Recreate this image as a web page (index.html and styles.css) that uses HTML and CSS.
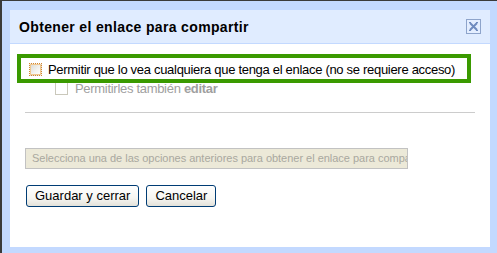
FILE: index.html
```html
<!DOCTYPE html>
<html lang="es">
<head>
<meta charset="utf-8">
<title>Obtener el enlace para compartir</title>
<link rel="stylesheet" href="styles.css">
</head>
<body>
<div class="frame">
  <div class="dialog">
    <div class="header">
      <span class="title">Obtener el enlace para compartir</span>
      <span class="close" aria-label="Cerrar">
        <svg width="13" height="13" viewBox="0 0 13 13">
          <path d="M3 3 L10 10 M10 3 L3 10" stroke="#6f8bbf" stroke-width="2" fill="none"/>
          <path d="M2 2h2v1h-2zM9 2h2v1h-2zM2 10h2v1h-2zM9 10h2v1h-2z" fill="#6f8bbf"/>
        </svg>
      </span>
    </div>
    <div class="content">
      <div class="option main">
        <span class="cb cb-focus"></span>
        <span class="label">Permitir que lo vea cualquiera que tenga el enlace (no se requiere acceso)</span>
        <div class="highlight"></div>
      </div>
      <div class="option sub">
        <span class="cb cb-disabled"></span>
        <span class="label disabled">Permitirles también <b>editar</b></span>
      </div>
      <div class="sep"></div>
      <div class="linkbox">Selecciona una de las opciones anteriores para obtener el enlace para compartir</div>
      <div class="actions">
        <button class="btn">Guardar y cerrar</button>
        <button class="btn">Cancelar</button>
      </div>
    </div>
  </div>
</div>
</body>
</html>
```
FILE: styles.css
```css
html, body {
  margin: 0;
  padding: 0;
  background: #ffffff;
}
.frame {
  box-sizing: border-box;
  width: 497px;
  height: 253px;
  border-top: 1px solid #3a3a3a;
  border-left: 2px solid #3a3a3a;
  background: #c3d9ff;
  padding: 9px 7px 6px 8px;
  font-family: "Liberation Sans", Arial, sans-serif;
}
.dialog {
  height: 237px;
  background: #ffffff;
  display: flex;
  flex-direction: column;
}
.header {
  box-sizing: border-box;
  height: 34px;
  flex: none;
  background: #e0ecff;
  border-bottom: 1px solid #c3d9ff;
  display: flex;
  align-items: center;
  justify-content: space-between;
  padding: 0 9px 0 9px;
}
.title {
  font-size: 14px;
  font-weight: bold;
  letter-spacing: 0.35px;
  color: #000;
}
.close {
  box-sizing: border-box;
  width: 15px;
  height: 15px;
  border: 1px solid #8ea4cb;
  display: flex;
  align-items: center;
  justify-content: center;
  background: #e4eeff;
}
.content {
  padding: 16px 15px 0 15px;
}
.option {
  display: flex;
  align-items: center;
  height: 18px;
  font-size: 13px;
  letter-spacing: -0.3px;
}
.main {
  position: relative;
  padding-left: 4px;
}
.sub {
  padding-left: 30px;
  margin-top: 1px;
}
.cb {
  box-sizing: border-box;
  width: 13px;
  height: 13px;
  flex: none;
}
.cb-focus {
  border: 1px dotted #d4852c;
  background: linear-gradient(135deg, #d8d8d2 0%, #f4f4f0 60%, #ffffff 100%);
  box-shadow: inset 0 0 0 1px #f0c890;
  margin-right: 6px;
}
.cb-disabled {
  border: 1px solid #cac8bb;
  background: #ffffff;
  margin-right: 7px;
}
.label {
  color: #000;
  white-space: nowrap;
}
.label.disabled {
  color: #a0a0a0;
}
.highlight {
  position: absolute;
  left: -8px;
  right: 4px;
  top: -6px;
  bottom: -5px;
  border: 4px solid #3a9a00;
  pointer-events: none;
}
.sep {
  height: 1px;
  background: #cccccc;
  margin-top: 15px;
}
.linkbox {
  box-sizing: border-box;
  width: 383px;
  height: 21px;
  margin-top: 35px;
  border: 1px solid #c2c2c2;
  background: #ece9d8;
  color: #a9a89f;
  font-size: 11px;
  letter-spacing: -0.02px;
  line-height: 19px;
  padding: 0 3px 0 6px;
  white-space: nowrap;
  overflow: hidden;
}
.actions {
  display: flex;
  gap: 7px;
  margin-top: 16px;
  padding-left: 1px;
}
.btn {
  box-sizing: border-box;
  height: 22px;
  padding: 0 8px;
  border: 1px solid #003c74;
  border-radius: 3px;
  background: linear-gradient(to bottom, #ffffff 0%, #f6f6f2 60%, #e3e2da 100%);
  font-family: "Liberation Sans", Arial, sans-serif;
  font-size: 13px;
  color: #000;
  line-height: 20px;
}
```
